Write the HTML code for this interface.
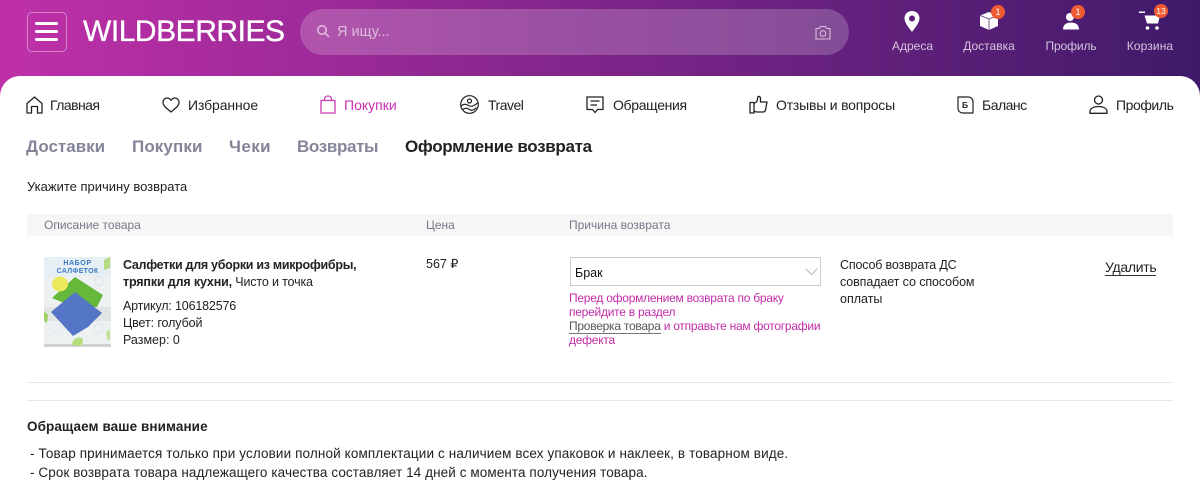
<!DOCTYPE html>
<html lang="ru"><head><meta charset="utf-8"><title>Wildberries</title>
<style>
html,body{margin:0;padding:0}
body{width:1200px;height:498px;overflow:hidden;position:relative;background:#fff;font-family:"Liberation Sans",sans-serif;color:#222}
.a{position:absolute;white-space:nowrap}
#hd{left:0;top:0;width:1200px;height:110px;background:linear-gradient(90deg,#bf30a9 0%,#3f1a6a 100%)}
#main{left:0;top:76px;width:1200px;height:422px;background:#fff;border-radius:20px 20px 0 0}
.nav{font-size:14px;line-height:18px;top:96px;color:#222}
.tab{font-size:17px;font-weight:bold;line-height:22px;top:136px;color:#85859a}
.hl{font-size:12px;line-height:14px;top:39px;color:#d6c5dd;transform:translateX(-50%)}
.bd{width:14px;height:14px;border-radius:50%;background:#ee5a32;color:#fff;font-size:9px;line-height:14px;text-align:center}
.t{font-size:12.5px;line-height:17px;color:#222}
.m{font-size:12px;line-height:14px;color:#c22ca8;letter-spacing:-.25px}
.h{font-size:12px;line-height:15px;color:#77778a;top:218px}
svg{position:absolute;overflow:visible}
</style></head><body>
<div class="a" id="hd"></div>
<div class="a" style="left:27px;top:12px;width:38px;height:38px;border:1px solid rgba(255,255,255,.4);border-radius:5px"></div>
<div class="a" style="left:35px;top:22px;width:23px;height:3px;background:#fff;border-radius:2px"></div>
<div class="a" style="left:35px;top:30px;width:23px;height:3px;background:#fff;border-radius:2px"></div>
<div class="a" style="left:35px;top:38px;width:23px;height:3px;background:#fff;border-radius:2px"></div>
<div class="a" style="left:83px;top:14px;font-size:30px;line-height:36px;color:#fff;letter-spacing:-.47px;-webkit-text-stroke:.35px #fff">WILDBERRIES</div>
<div class="a" style="left:300px;top:9px;width:549px;height:46px;border-radius:23px;background:rgba(255,255,255,.2)"></div>
<svg style="left:316px;top:24px" width="16" height="16" viewBox="0 0 16 16" fill="none" stroke="#e0c4e0" stroke-width="1.5"><circle cx="6" cy="6" r="4.2"/><path d="M9.2 9.2L13 13"/></svg>
<div class="a" style="left:337px;top:24px;font-size:14.5px;line-height:17px;color:#e0bddd">Я ищу...</div>
<svg style="left:815px;top:25px" width="16" height="15" viewBox="0 0 16 15" fill="none" stroke="#d5bfd9" stroke-width="1.1"><path d="M1 3.500H4.500L5.500 1.500H10.500L11.500 3.500H15V14H1Z"/><circle cx="8" cy="8.500" r="2.800"/></svg>
<svg style="left:904px;top:11px" width="16" height="22" viewBox="0 0 16 22"><path fill="#fff" fill-rule="evenodd" d="M8 0C3.600 0 .5 3.200.5 7.300.5 12 5.500 17.500 8 21c2.500-3.500 7.500-9 7.500-13.700C15.500 3.200 12.400 0 8 0ZM8 4.500a3 3 0 1 1 0 6 3 3 0 0 1 0-6Z"/></svg>
<svg style="left:980px;top:12px" width="18" height="18" viewBox="0 0 18 18"><path fill="#fff" d="M9 0L18 3.500V14L9 18 0 14V3.500Z"/><path fill="none" stroke="#5a2078" stroke-width="1" d="M0 3.500L9 7 18 3.500M9 7V18" opacity=".75"/></svg>
<div class="a bd" style="left:991px;top:5px">1</div>
<div class="a hl" style="left:912.5px">Адреса</div>
<div class="a hl" style="left:989px">Доставка</div>
<svg style="left:1063px;top:12px" width="16" height="18" viewBox="0 0 16 18"><circle cx="7" cy="5" r="4" fill="#fff"/><path fill="#fff" d="M0 17.500C0 13 3 10.500 8 10.500s8 2.500 8 7Z"/></svg>
<div class="a bd" style="left:1071px;top:5px">1</div>
<div class="a hl" style="left:1071px;letter-spacing:-.1px">Профиль</div>
<svg style="left:1139px;top:11px" width="22" height="20" viewBox="0 0 22 20"><path fill="#fff" d="M0 .5H6V2H0ZM5.500 4.500H21L19 12.500H8Z"/><circle cx="8.500" cy="17" r="1.800" fill="#fff"/><circle cx="18" cy="17" r="1.800" fill="#fff"/></svg>
<div class="a bd" style="left:1154px;top:4px;font-size:8.5px">13</div>
<div class="a hl" style="left:1150px;letter-spacing:.1px">Корзина</div>

<div class="a" id="main"></div>

<svg style="left:26px;top:96px" width="17" height="18" viewBox="0 0 17 18" fill="none" stroke="#222" stroke-width="1.300"><path d="M1 17V7.500L8.500 1 16 7.500V17H11.500V10.500H5.500V17Z" stroke-linejoin="round"/></svg>
<div class="a nav" style="left:50px;letter-spacing:-.55px">Главная</div>
<svg style="left:162px;top:97px" width="18" height="16" viewBox="0 0 18 16" fill="none" stroke="#222" stroke-width="1.300"><path d="M9 15C4 11 1 8.500 1 5.200 1 2.800 2.800 1 5 1c1.600 0 3 .8 4 2.300C10 1.800 11.400 1 13 1c2.200 0 4 1.800 4 4.200C17 8.500 14 11 9 15Z" stroke-linejoin="round"/></svg>
<div class="a nav" style="left:188px;letter-spacing:-.1px">Избранное</div>
<svg style="left:320px;top:95px" width="16" height="19" viewBox="0 0 16 19" fill="none" stroke="#cb3bb4" stroke-width="1.300"><path d="M1 5.500H15V18H1ZM4.500 5.500V4C4.500 2.200 6 1 8 1s3.500 1.200 3.500 3V5.500"/></svg>
<div class="a nav" style="left:344px;color:#cb2fb0">Покупки</div>
<svg style="left:460px;top:95px" width="19" height="19" viewBox="0 0 19 19" fill="none" stroke="#222" stroke-width="1.200"><circle cx="9.500" cy="9.500" r="8.800"/><circle cx="9.500" cy="6" r="2"/><path d="M1 11c3-2.500 5-2 7.500-.5s5 1 9-2.500M2.500 14.500c3-2 5-1.500 7 0s4 1 7-2"/></svg>
<div class="a nav" style="left:488px;letter-spacing:-.5px">Travel</div>
<svg style="left:586px;top:96px" width="18" height="18" viewBox="0 0 18 18" fill="none" stroke="#222" stroke-width="1.300"><path d="M1 1H17V13.500H11.500L9 16.500 6.500 13.500H1ZM4.500 5H13.500M4.500 9H11"/></svg>
<div class="a nav" style="left:613px;letter-spacing:-.33px">Обращения</div>
<svg style="left:749px;top:95px" width="19" height="19" viewBox="0 0 19 19" fill="none" stroke="#222" stroke-width="1.300"><path d="M1 7.500H5V18H1ZM5 8.500L8 6.500 9 1.500C10.500 1 11.500 2 11.500 3.500V7H18L16.500 15C16 16.500 15 17 14 17H8C6.500 17 5.500 16.500 5 15.500" stroke-linejoin="round"/></svg>
<div class="a nav" style="left:776px;letter-spacing:-.2px">Отзывы и вопросы</div>
<svg style="left:957px;top:96px" width="17" height="18" viewBox="0 0 17 18" fill="none" stroke="#222" stroke-width="1.200"><path d="M1 1H11C14 1 16 3 16 6V17H6C3 17 1 15 1 12Z" stroke-linejoin="round"/></svg>
<div class="a" style="left:962px;top:100px;font-size:8.5px;line-height:11px;font-weight:bold;color:#222">Б</div>
<div class="a nav" style="left:982px;letter-spacing:-.5px">Баланс</div>
<svg style="left:1089px;top:95px" width="19" height="19" viewBox="0 0 19 19" fill="none" stroke="#222" stroke-width="1.300"><circle cx="9.500" cy="5" r="4"/><path d="M1 18.300V16.500C1 13.500 4.500 11.500 9.500 11.500s8.500 2 8.500 5v1.800Z"/></svg>
<div class="a nav" style="left:1116px;letter-spacing:-.43px">Профиль</div>

<div class="a tab" style="left:26px">Доставки</div>
<div class="a tab" style="left:132px;letter-spacing:.1px">Покупки</div>
<div class="a tab" style="left:229px;letter-spacing:.4px">Чеки</div>
<div class="a tab" style="left:297px;letter-spacing:-.35px">Возвраты</div>
<div class="a tab" style="left:405px;color:#222;letter-spacing:-.32px">Оформление возврата</div>

<div class="a" style="left:27px;top:178px;font-size:13px;line-height:17px;color:#222">Укажите причину возврата</div>

<div class="a" style="left:27px;top:214px;width:1146px;height:22px;background:#f6f6f6"></div>
<div class="a h" style="left:44px">Описание товара</div>
<div class="a h" style="left:426px">Цена</div>
<div class="a h" style="left:569px">Причина возврата</div>

<svg style="left:44px;top:257px;filter:blur(.35px)" width="67" height="90" viewBox="0 0 67 90">
<rect width="67" height="90" fill="#eef1f2"/>
<rect y="0" width="67" height="20" fill="#e6f0f4"/>
<rect y="50" width="67" height="14" fill="#e2e5e5"/>
<path d="M0 87H67V90H0Z" fill="#cfd3cf"/>
<path d="M60 3L66 0V11L60 13Z" fill="#b5dc80"/>
<path d="M0 54L4 58 3 66 0 64Z" fill="#9bd260"/>
<path d="M62 76L66 72V84L63 82Z" fill="#c2e09a"/>
<path d="M28 88C28 82 34 79 38 81 40 84 38 88 36 89Z" fill="#b4dc78"/>
<path d="M8 41L31 20 59 38 53 50H30Z" fill="#66b83a"/>
<ellipse cx="16" cy="27" rx="8" ry="7.500" fill="#ebe85c"/>
<path d="M7 55L31 35 58 56 44 70 29 79Z" fill="#5576c6"/>
<circle cx="55" cy="24" r="4.500" fill="none" stroke="#dde3ea" stroke-width=".8"/>
<circle cx="12" cy="71" r="4.500" fill="none" stroke="#dde3ea" stroke-width=".8"/>
<circle cx="55" cy="71" r="4.500" fill="none" stroke="#dde3ea" stroke-width=".8"/>
<text x="33.500" y="8" font-size="7" font-weight="bold" text-anchor="middle" fill="#3d79c4" font-family="Liberation Sans" letter-spacing=".6">НАБОР</text>
<text x="33.500" y="16" font-size="7" font-weight="bold" text-anchor="middle" fill="#3d79c4" font-family="Liberation Sans" letter-spacing=".3">САЛФЕТОК</text>
</svg>

<div class="a" style="left:123px;top:257px;font-size:12.5px;line-height:17px;font-weight:bold;color:#222;letter-spacing:-.29px">Салфетки для уборки из микрофибры,</div>
<div class="a" style="left:123px;top:274px;font-size:12.5px;line-height:17px;font-weight:bold;color:#222;letter-spacing:-.15px">тряпки для кухни, <span style="font-weight:normal">Чисто и точка</span></div>
<div class="a t" style="left:123px;top:298px;letter-spacing:-.17px">Артикул: 106182576</div>
<div class="a t" style="left:123px;top:315px;letter-spacing:-.1px">Цвет: голубой</div>
<div class="a t" style="left:123px;top:332px">Размер: 0</div>

<div class="a t" style="left:426px;top:256px">567 ₽</div>

<div class="a" style="left:570px;top:257px;width:249px;height:27px;border:1px solid #ccc;background:#fff"></div>
<div class="a" style="left:575px;top:265px;font-size:12.5px;line-height:16px;color:#111">Брак</div>
<svg style="left:805px;top:268px" width="13" height="7" viewBox="0 0 13 7" fill="none" stroke="#b8b8b8" stroke-width="1"><path d="M.5.5L6.500 6.500 12.500.5"/></svg>
<div class="a m" style="left:569px;top:291px">Перед оформлением возврата по браку</div>
<div class="a m" style="left:569px;top:305px">перейдите в раздел</div>
<div class="a m" style="left:569px;top:319px"><span style="color:#555;border-bottom:1px solid #777">Проверка товара</span> и отправьте нам фотографии</div>
<div class="a m" style="left:569px;top:333px">дефекта</div>

<div class="a t" style="left:840px;top:257px;letter-spacing:-.17px">Способ возврата ДС</div>
<div class="a t" style="left:840px;top:274px;letter-spacing:-.1px">совпадает со способом</div>
<div class="a t" style="left:840px;top:291px">оплаты</div>

<div class="a" style="left:1105px;top:259px;font-size:14px;line-height:16px;color:#222;border-bottom:1px solid #333;letter-spacing:-.3px">Удалить</div>

<div class="a" style="left:27px;top:382px;width:1146px;height:1px;background:#e6e6e6"></div>
<div class="a" style="left:27px;top:400px;width:1146px;height:1px;background:#e6e6e6"></div>

<div class="a" style="left:27px;top:418px;font-size:13.5px;line-height:18px;font-weight:bold;color:#222;letter-spacing:.08px">Обращаем ваше внимание</div>
<div class="a" style="left:30px;top:445px;font-size:13.5px;line-height:18px;color:#222;letter-spacing:.125px">- Товар принимается только при условии полной комплектации с наличием всех упаковок и наклеек, в товарном виде.</div>
<div class="a" style="left:30px;top:464px;font-size:13.5px;line-height:18px;color:#222;letter-spacing:.09px">- Срок возврата товара надлежащего качества составляет 14 дней с момента получения товара.</div>
</body></html>
